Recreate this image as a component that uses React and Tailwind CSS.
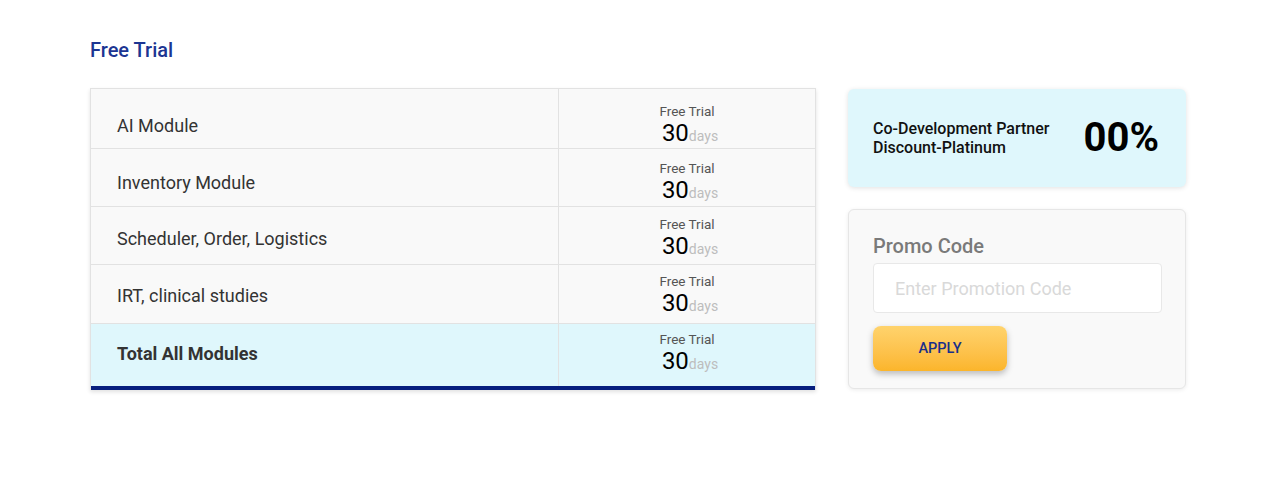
const rows = [
  { label: 'AI Module', h: 'h-[60px]', pt: 'pt-[14px]', lpt: 'pt-[26px]' },
  { label: 'Inventory Module', h: 'h-[58px]', pt: 'pt-[11px]', lpt: 'pt-[23px]' },
  { label: 'Scheduler, Order, Logistics', h: 'h-[58px]', pt: 'pt-[9px]', lpt: 'pt-[21px]' },
  { label: 'IRT, clinical studies', h: 'h-[59px]', pt: 'pt-[8px]', lpt: 'pt-[20px]' },
];

function TrialCell() {
  return (
    <div className="flex flex-col items-center">
      <span className="text-[13.5px] leading-[16px] text-[#555]">Free Trial</span>
      <span className="flex items-baseline pl-[6px] leading-[28px]">
        <span className="text-[24px] text-black">30</span>
        <span className="text-[14px] text-[#bdbdbd]">days</span>
      </span>
    </div>
  );
}

function Row({ label, h, pt, lpt, total }) {
  return (
    <div className={`flex ${h} ${total ? 'bg-[#dff7fc]' : 'border-b border-[#e2e2e2]'}`}>
      <div className={`w-[467px] pl-[26px] ${lpt}`}>
        <span className={`text-[18px] leading-[20px] text-[#333] ${total ? 'font-bold' : ''}`}>
          {label}
        </span>
      </div>
      <div className={`flex-1 border-l border-[#e2e2e2] ${pt}`}>
        <TrialCell />
      </div>
    </div>
  );
}

export default function App() {
  return (
    <div
      className="min-h-[498px] w-[1275px] bg-white pl-[90px] pt-[38px]"
      style={{ fontFamily: 'Roboto, "Noto Sans", sans-serif' }}
    >
      <h1 className="text-[20px] leading-[24px] font-medium text-[#1c3592]">Free Trial</h1>

      <div className="mt-[26px] flex items-start gap-[32px]">
        <div className="w-[726px] border-x border-t border-[#e2e2e2] bg-[#f9f9f9] shadow-[0_2px_4px_rgba(0,0,0,0.12)]">
          {rows.map((r) => (
            <Row key={r.label} {...r} />
          ))}
          <Row label="Total All Modules" h="h-[62px]" pt="pt-[7px]" lpt="pt-[19px]" total />
          <div className="h-[4px] bg-[#061e7e]" />
        </div>

        <div className="flex w-[338px] flex-col gap-[22px] pt-[1px]">
          <div className="flex h-[98px] items-center justify-between rounded-md bg-[#dff7fc] pl-[25px] pr-[27px] shadow-[0_1px_5px_rgba(0,0,0,0.12)]">
            <div className="text-[16px] leading-[19px] font-medium text-[#111]">
              <div>Co-Development Partner</div>
              <div>Discount-Platinum</div>
            </div>
            <div className="text-[40px] font-bold leading-none text-black">00%</div>
          </div>

          <div className="h-[180px] rounded-md border border-[#e6e6e6] bg-[#f9f9f9] px-[24px] pt-[24px] shadow-[0_1px_4px_rgba(0,0,0,0.08)]">
            <div className="text-[20px] leading-[24px] font-medium text-[#7a7a7a]">Promo Code</div>
            <input
              className="mt-[5px] h-[50px] w-[289px] rounded-[4px] border border-[#e8e8e8] bg-white px-[21px] text-[18px] outline-none placeholder:text-[#d9d9d9]"
              placeholder="Enter Promotion Code"
            />
            <button className="mt-[13px] h-[45px] w-[134px] rounded-lg bg-gradient-to-b from-[#ffd36c] to-[#fbb52a] text-[14.5px] font-medium text-[#1a2f8a] shadow-[0_3px_6px_rgba(0,0,0,0.25)]">
              APPLY
            </button>
          </div>
        </div>
      </div>
    </div>
  );
}
